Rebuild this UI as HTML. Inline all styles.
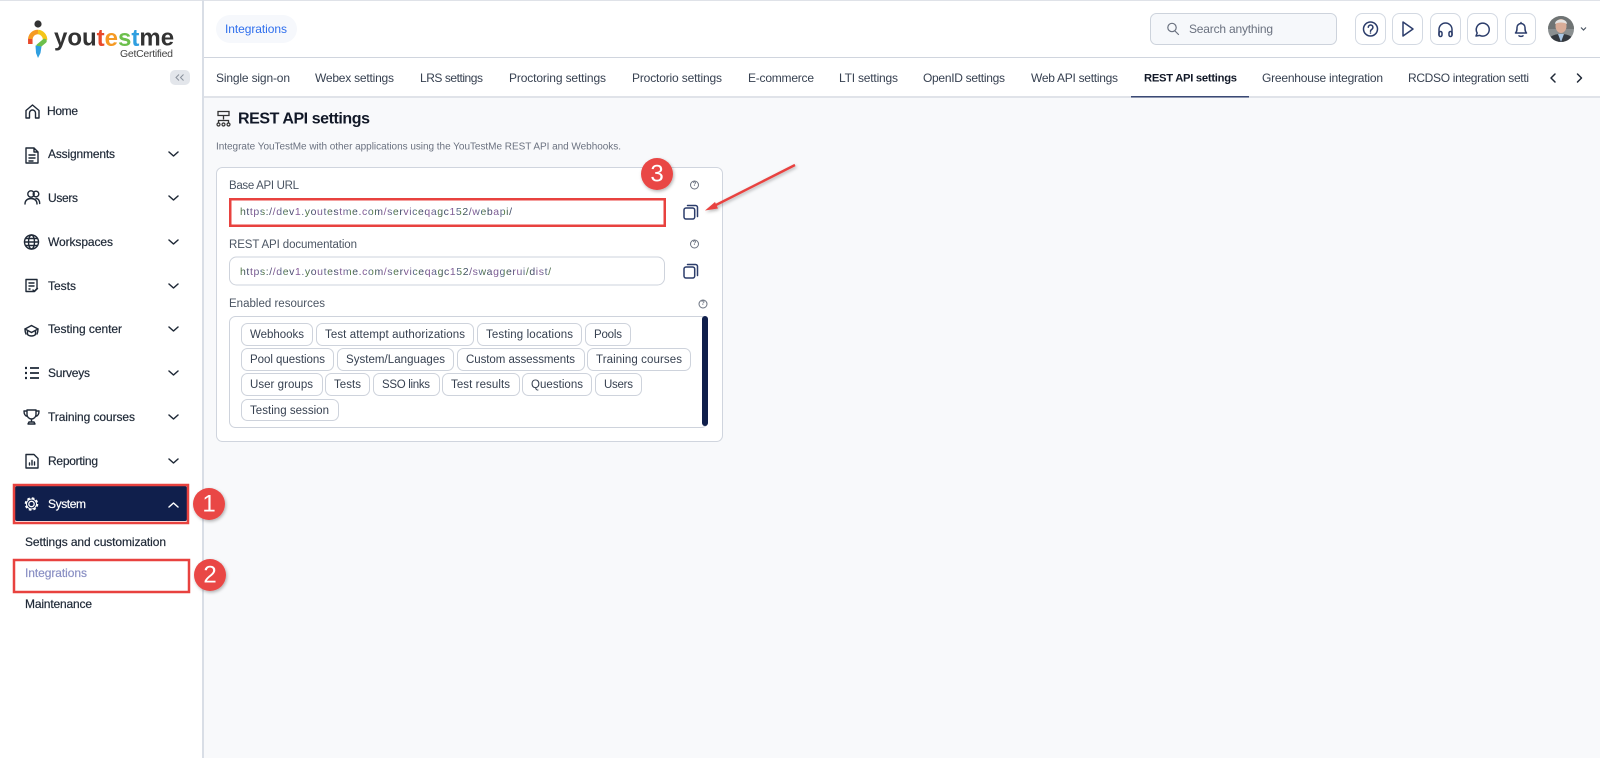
<!DOCTYPE html>
<html lang="en"><head><meta charset="utf-8"><title>REST API settings</title>
<style>
html,body{margin:0;padding:0;width:1600px;height:758px;overflow:hidden;background:#fff}
svg{display:block}
text{font-family:"Liberation Sans",sans-serif}
.nav{font-size:12px;fill:#1f2937;stroke:#1f2937;stroke-width:.2;dominant-baseline:central}
.tab{font-size:12px;fill:#374151;dominant-baseline:central}
.lbl{font-size:11.5px;fill:#4b5563;dominant-baseline:central}
.chip{font-size:11.5px;fill:#374151;dominant-baseline:central}
.chipb{fill:#fff;stroke:#ced3dc;stroke-width:1}
.url{font-size:10.5px;fill:url(#fr);dominant-baseline:central}
.ic{fill:none;stroke:#1f2937;stroke-width:1.4;stroke-linecap:round;stroke-linejoin:round}
.tb{fill:none;stroke:#2c3d6b;stroke-width:1.5;stroke-linecap:round;stroke-linejoin:round}
.tbb{fill:#fff;stroke:#d3d9e2;stroke-width:1}
.chev{fill:none;stroke:#1f2937;stroke-width:1.5;stroke-linecap:round;stroke-linejoin:round}
.help{fill:none;stroke:#6b7280;stroke-width:1}
.helpt{font-size:6px;fill:#6b7280;text-anchor:middle;dominant-baseline:central;font-weight:bold}
.badge{fill:#e94745}
.badget{font-size:24px;fill:#fff;text-anchor:middle;dominant-baseline:central}
.red{fill:none;stroke:#e8423f;stroke-width:2.5}
.logo{font-size:24px;font-weight:bold;dominant-baseline:central}
</style></head><body>
<svg width="1600" height="758" viewBox="0 0 1600 758" xmlns="http://www.w3.org/2000/svg">
<defs>
<filter id="sh" x="-30%" y="-30%" width="160%" height="160%"><feDropShadow dx="1" dy="1.5" stdDeviation="1.5" flood-color="#000" flood-opacity=".3"/></filter>
<clipPath id="av"><circle cx="1561" cy="29" r="13"/></clipPath>
<linearGradient id="fr" gradientUnits="userSpaceOnUse" x1="240" y1="0" x2="262" y2="0" spreadMethod="repeat">
<stop offset="0" stop-color="#55803f"/><stop offset=".3" stop-color="#3d4a68"/><stop offset=".6" stop-color="#8a5a9a"/><stop offset="1" stop-color="#4a6a80"/>
</linearGradient>
</defs>
<rect width="1600" height="758" fill="#fff"/>
<rect x="203" y="98" width="1397" height="660" fill="#f8f9fb"/>
<rect x="0" y="0" width="1600" height="1" fill="#dfe2e8"/>
<rect x="202" y="0" width="2" height="758" fill="#d9dee6"/>
<rect x="204" y="57" width="1396" height="1" fill="#d0d5de"/>
<rect x="204" y="96" width="1396" height="2" fill="#e0e3e9"/>

<!-- logo -->
<circle cx="38" cy="24" r="3.6" fill="#333"/>
<path d="M30.300 44V38.500" fill="none" stroke="#e8492b" stroke-width="4.500"/>
<path d="M30.300 39A7.500 7.500 0 0 1 38 32" fill="none" stroke="#f59a23" stroke-width="4.500"/>
<path d="M38 32A7.500 7.500 0 0 1 45 40" fill="none" stroke="#f5c518" stroke-width="4.500"/>
<path d="M44.500 41L38.500 46" fill="none" stroke="#6cbf4b" stroke-width="4.500" stroke-linecap="round"/>
<path d="M35.500 45.500L41.500 46.500L40.500 53L38 58L36 53Z" fill="#2f9fe0"/>
<text class="logo" x="54" y="38" fill="#333">you<tspan fill="#e8492b">t</tspan><tspan fill="#f59a23">e</tspan><tspan fill="#6cbf4b">s</tspan><tspan fill="#2f9fe0">t</tspan>me</text>
<text x="120" y="54" font-size="10.5" fill="#444" dominant-baseline="central" textLength="53">GetCertified</text>
<rect x="170" y="70" width="20" height="15" rx="5" fill="#e3e6eb"/>
<path d="M179 74.500l-3 3 3 3M183.500 74.500l-3 3 3 3" fill="none" stroke="#8a919c" stroke-width="1"/>

<!-- nav -->
<path class="ic" d="M26 118v-7.500l6.500-5.500 6.500 5.500v7.500h-3.500v-5a3 3 0 0 0-6 0v5z"/>
<text class="nav" x="47" y="111" textLength="31">Home</text>
<path class="ic" d="M26 148h8l4 4v11h-12zM34 148v4h4M29 155h6M29 158h6M29 161h4"/>
<text class="nav" x="48" y="154" textLength="67">Assignments</text>
<circle class="ic" cx="31" cy="194" r="3.200"/><circle class="ic" cx="36" cy="194" r="2.800"/><path class="ic" d="M25 204c0-3.500 2.500-5.500 6-5.500s6 2 6 5.500M36 198.500c2.500 0 3.700 2.500 3.700 5"/>
<text class="nav" x="48" y="198" textLength="30">Users</text>
<circle class="ic" cx="31.500" cy="242" r="7"/><ellipse class="ic" cx="31.500" cy="242" rx="3" ry="7"/><path class="ic" d="M24.500 242h14M25.500 238.500h12M25.500 245.500h12"/>
<text class="nav" x="48" y="242" textLength="65">Workspaces</text>
<path class="ic" d="M26 279.500h11v9l-3 3h-8zM29 283h5M29 286h5M29 289h1"/><path class="ic" d="M33 290l1.500 1.500 3-3"/>
<text class="nav" x="48" y="286" textLength="28">Tests</text>
<path class="ic" d="M25 329l6.500-3.500 6.500 3.500-6.500 3.500zM27.500 331v3.500c2 2 6 2 8 0V331"/><path class="ic" d="M25 329c0 3 .5 4 1 5M38 329c0 3-.5 4-1 5"/>
<text class="nav" x="48" y="329" textLength="74">Testing center</text>
<path d="M30 368h9M30 373h9M30 378h9" fill="none" stroke="#1f2937" stroke-width="1.700"/><path d="M25 368h2M25 373h2M25 378h2" fill="none" stroke="#1f2937" stroke-width="2.200"/>
<text class="nav" x="48" y="373" textLength="42">Surveys</text>
<path class="ic" d="M27 410h9v4.500a4.500 4.500 0 0 1-9 0zM27 411h-3c0 3 1 5 3.500 5.500M36 411h3c0 3-1 5-3.500 5.500M31.500 419v3M28 424h7l-1-2h-5z"/>
<text class="nav" x="48" y="417" textLength="87">Training courses</text>
<path class="ic" d="M26 454.500h8l4 4v9.500h-12zM29.500 465v-2M32 465v-4.500M34.500 465v-3"/>
<text class="nav" x="48" y="461" textLength="50">Reporting</text>
<path class="chev" d="M169 152l4.500 4 4.500-4M169 196l4.500 4 4.500-4M169 240l4.500 4 4.500-4M169 284l4.500 4 4.500-4M169 327l4.500 4 4.500-4M169 371l4.500 4 4.500-4M169 415l4.500 4 4.500-4M169 459l4.500 4 4.500-4"/>

<rect x="15" y="486" width="172" height="35" rx="2" fill="#101f4c"/>
<circle cx="31.500" cy="504" r="2.700" fill="none" stroke="#fff" stroke-width="1.300"/>
<circle cx="31.500" cy="504" r="5.700" fill="none" stroke="#fff" stroke-width="2.200" stroke-dasharray="2.500 2"/>
<circle cx="31.500" cy="504" r="5" fill="none" stroke="#fff" stroke-width="1"/>
<text class="nav" x="48" y="504" textLength="38" style="fill:#fff;stroke:#fff">System</text>
<path d="M169 507l4.500-4 4.500 4" fill="none" stroke="#fff" stroke-width="1.500" stroke-linecap="round" stroke-linejoin="round"/>
<rect class="red" x="14" y="485" width="174" height="38"/>
<circle class="badge" cx="209" cy="504" r="16" filter="url(#sh)"/><text class="badget" x="209" y="504">1</text>
<text class="nav" x="25" y="542" textLength="141">Settings and customization</text>
<text class="nav" x="25" y="573" textLength="62" style="fill:#8a90c4;stroke:#8a90c4">Integrations</text>
<text class="nav" x="25" y="604" textLength="67">Maintenance</text>
<rect class="red" x="14" y="560" width="175" height="32"/>
<circle class="badge" cx="210" cy="575" r="16" filter="url(#sh)"/><text class="badget" x="210" y="575">2</text>

<!-- header -->
<rect x="216" y="15" width="81" height="28" rx="14" fill="#f6f8fc"/>
<text x="225" y="29" font-size="12" fill="#2f6fed" dominant-baseline="central" textLength="62">Integrations</text>
<rect x="1150.500" y="13.500" width="186" height="31" rx="6" fill="#f6f8fb" stroke="#cdd3dc"/>
<circle cx="1172" cy="27.500" r="4.200" fill="none" stroke="#6b7280" stroke-width="1.200"/><path d="M1175 31l3.500 3.500" stroke="#6b7280" stroke-width="1.200" stroke-linecap="round"/>
<text x="1189" y="29" font-size="12" fill="#6b7280" dominant-baseline="central" textLength="84">Search anything</text>
<rect class="tbb" x="1355.500" y="13.500" width="30" height="31" rx="7"/>
<rect class="tbb" x="1392.500" y="13.500" width="30" height="31" rx="7"/>
<rect class="tbb" x="1430.500" y="13.500" width="30" height="31" rx="7"/>
<rect class="tbb" x="1467.500" y="13.500" width="30" height="31" rx="7"/>
<rect class="tbb" x="1505.500" y="13.500" width="30" height="31" rx="7"/>
<circle class="tb" cx="1370.500" cy="29" r="7"/>
<path class="tb" d="M1368.300 27.300a2.300 2.300 0 1 1 3.600 1.900c-.9.600-1.400 1-1.400 2" stroke-width="1.300"/><circle cx="1370.500" cy="33" r=".8" fill="#2c3d6b"/>
<path class="tb" d="M1403 22v14l10-7z"/>
<path class="tb" d="M1439 35v-5.500a6.500 6.500 0 0 1 13 0V35"/><rect class="tb" x="1439" y="31.500" width="3" height="5" rx="1.500"/><rect class="tb" x="1449" y="31.500" width="3" height="5" rx="1.500"/>
<path class="tb" d="M1476 36l1.200-3a6.500 6.500 0 1 1 2.600 2.400z"/>
<path class="tb" d="M1515.500 33h11c-1.500-1.500-1.500-3-1.500-5.500a4 4 0 0 0-8 0c0 2.500 0 4-1.500 5.500zM1519 35.800c1 .8 3 .8 4 0M1521 22.500v1"/>
<circle cx="1561" cy="29" r="13" fill="#8a8f90"/>
<g clip-path="url(#av)">
<rect x="1548" y="16" width="26" height="13" fill="#6f7474"/>
<ellipse cx="1561" cy="26" rx="5.500" ry="7" fill="#d8ad98"/>
<path d="M1555 24c0-6 12-6 12 0c-3-2-9-2-12 0z" fill="#e4e4e2"/>
<path d="M1547 43c1-7 8-9 14-9s13 2 14 9z" fill="#33383e"/>
<path d="M1558 34l3 8 3-8z" fill="#a9c6e4"/>
</g>
<path d="M1581 27.500l2.500 2.500 2.500-2.500" fill="none" stroke="#4b5563" stroke-width="1.200"/>

<!-- tabs -->
<text class="tab" x="216" y="78" textLength="74">Single sign-on</text>
<text class="tab" x="315" y="78" textLength="79">Webex settings</text>
<text class="tab" x="420" y="78" textLength="63">LRS settings</text>
<text class="tab" x="509" y="78" textLength="97">Proctoring settings</text>
<text class="tab" x="632" y="78" textLength="90">Proctorio settings</text>
<text class="tab" x="748" y="78" textLength="66">E-commerce</text>
<text class="tab" x="839" y="78" textLength="59">LTI settings</text>
<text class="tab" x="923" y="78" textLength="82">OpenID settings</text>
<text class="tab" x="1031" y="78" textLength="87">Web API settings</text>
<text class="tab" x="1144" y="78.500" textLength="93" style="font-weight:bold;fill:#111827;font-size:11.2px">REST API settings</text>
<text class="tab" x="1262" y="78" textLength="121">Greenhouse integration</text>
<text class="tab" x="1408" y="78" textLength="121">RCDSO integration setti</text>
<rect x="1131" y="96" width="118" height="1.500" fill="#3b4a75"/>
<path class="chev" d="M1555 74l-4 4 4 4M1577.500 74l4 4-4 4"/>

<!-- title -->
<path d="M218 111.500h11v4h-11zM223.500 115.500v4M218.500 123v-2.500h10V123" fill="none" stroke="#333" stroke-width="1.300"/>
<circle cx="218.500" cy="124.500" r="1.500" fill="none" stroke="#333" stroke-width="1.200"/><circle cx="223.500" cy="124.500" r="1.500" fill="none" stroke="#333" stroke-width="1.200"/><circle cx="228.500" cy="124.500" r="1.500" fill="none" stroke="#333" stroke-width="1.200"/>
<text x="238" y="119" font-size="16" font-weight="bold" fill="#111827" dominant-baseline="central" textLength="132">REST API settings</text>
<text x="216" y="147" font-size="10" fill="#6b7280" dominant-baseline="central" textLength="405">Integrate YouTestMe with other applications using the YouTestMe REST API and Webhooks.</text>

<!-- card -->
<rect x="216.500" y="167.500" width="506" height="274" rx="6" fill="#fff" stroke="#d0d5de"/>
<text class="lbl" x="229" y="186" textLength="70">Base API URL</text>
<circle class="help" cx="694.500" cy="185" r="4"/><text class="helpt" x="694.500" y="185">?</text>
<rect x="229" y="198" width="437" height="29" fill="#fff"/>
<rect x="230.250" y="199.250" width="434.500" height="26.500" fill="none" stroke="#e8423f" stroke-width="2.500"/>
<text class="url" x="240" y="212" textLength="272">https://dev1.youtestme.com/serviceqagc152/webapi/</text>
<path class="tb" d="M687.500 205.500h8a2 2 0 0 1 2 2v9"/><rect class="tb" x="684" y="208" width="10.700" height="11" rx="2"/>
<text class="lbl" x="229" y="245" textLength="128">REST API documentation</text>
<circle class="help" cx="694.500" cy="244" r="4"/><text class="helpt" x="694.500" y="244">?</text>
<rect x="229.500" y="257" width="435" height="28" rx="7" fill="#fff" stroke="#ced3dc"/>
<text class="url" x="240" y="272" textLength="311">https://dev1.youtestme.com/serviceqagc152/swaggerui/dist/</text>
<path class="tb" d="M687.500 264.500h8a2 2 0 0 1 2 2v9"/><rect class="tb" x="684" y="267" width="10.700" height="11" rx="2"/>
<text class="lbl" x="229" y="304" textLength="96">Enabled resources</text>
<circle class="help" cx="703" cy="304" r="4"/><text class="helpt" x="703" y="304">?</text>
<rect x="229.500" y="316.500" width="478" height="111" rx="6" fill="#fff" stroke="#ced3dc"/>
<rect x="702" y="316" width="6" height="110" rx="3" fill="#101f4c"/>

<rect class="chipb" x="241.500" y="323.500" width="71" height="22" rx="6"/><text class="chip" x="250" y="335" textLength="54">Webhooks</text>
<rect class="chipb" x="316.500" y="323.500" width="157" height="22" rx="6"/><text class="chip" x="325" y="335" textLength="140">Test attempt authorizations</text>
<rect class="chipb" x="477.500" y="323.500" width="104" height="22" rx="6"/><text class="chip" x="486" y="335" textLength="87">Testing locations</text>
<rect class="chipb" x="585.500" y="323.500" width="45" height="22" rx="6"/><text class="chip" x="594" y="335" textLength="28">Pools</text>

<rect class="chipb" x="241.500" y="348.500" width="92" height="22" rx="6"/><text class="chip" x="250" y="360" textLength="75">Pool questions</text>
<rect class="chipb" x="337.500" y="348.500" width="116" height="22" rx="6"/><text class="chip" x="346" y="360" textLength="99">System/Languages</text>
<rect class="chipb" x="457.500" y="348.500" width="127" height="22" rx="6"/><text class="chip" x="466" y="360" textLength="109">Custom assessments</text>
<rect class="chipb" x="587.500" y="348.500" width="103" height="22" rx="6"/><text class="chip" x="596" y="360" textLength="86">Training courses</text>

<rect class="chipb" x="241.500" y="373.500" width="81" height="22" rx="6"/><text class="chip" x="250" y="385" textLength="63">User groups</text>
<rect class="chipb" x="325.500" y="373.500" width="44" height="22" rx="6"/><text class="chip" x="334" y="385" textLength="27">Tests</text>
<rect class="chipb" x="373.500" y="373.500" width="66" height="22" rx="6"/><text class="chip" x="382" y="385" textLength="48">SSO links</text>
<rect class="chipb" x="442.500" y="373.500" width="77" height="22" rx="6"/><text class="chip" x="451" y="385" textLength="59">Test results</text>
<rect class="chipb" x="522.500" y="373.500" width="69" height="22" rx="6"/><text class="chip" x="531" y="385" textLength="52">Questions</text>
<rect class="chipb" x="595.500" y="373.500" width="46" height="22" rx="6"/><text class="chip" x="604" y="385" textLength="29">Users</text>

<rect class="chipb" x="241.500" y="399.500" width="97" height="21" rx="6"/><text class="chip" x="250" y="411" textLength="79">Testing session</text>

<!-- annotation -->
<circle class="badge" cx="657" cy="174" r="16" filter="url(#sh)"/><text class="badget" x="657" y="174">3</text>
<g filter="url(#sh)"><path d="M795 165L712 207" stroke="#e8423f" stroke-width="2.400" fill="none"/><path d="M705 210.500L715 202L718 208.500z" fill="#e8423f"/></g>
</svg>
</body></html>
